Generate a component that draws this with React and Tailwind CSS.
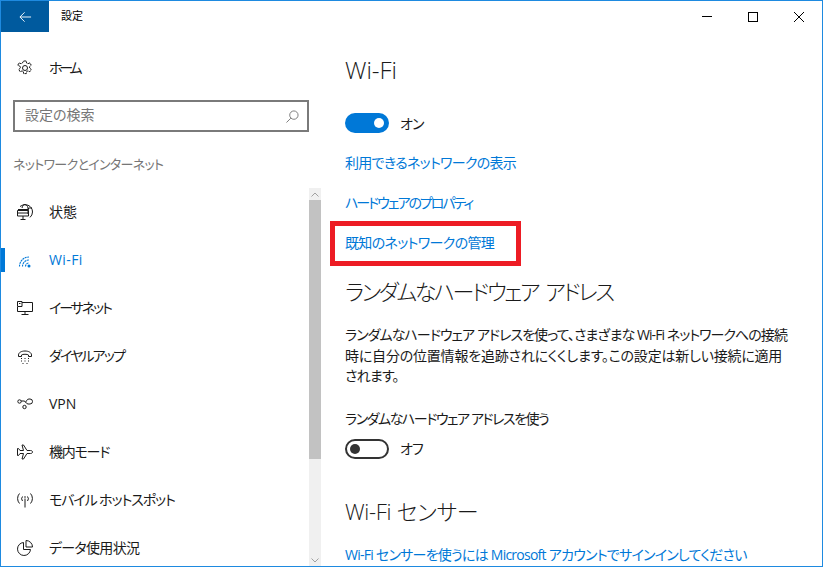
import { useState } from "react";

const font = "font-['Open_Sans','Noto_Sans_CJK_JP',sans-serif] [font-feature-settings:'palt']";

const Stroke = ({ children, className = "" }) => (
  <svg
    viewBox="0 0 16 16"
    fill="none"
    stroke="currentColor"
    strokeWidth="1"
    className={`w-4 h-4 shrink-0 ${className}`}
  >
    {children}
  </svg>
);

const GearIcon = () => (
  <Stroke>
    <path d="M6.700.5h2.600l.4 2.100 1.200.6 2-.8 1.300 2.300-1.600 1.400v1.400l1.600 1.400-1.300 2.300-2-.8-1.200.6-.4 2.100H6.700l-.4-2.100-1.200-.6-2 .8-1.300-2.300 1.600-1.400V6.100L.8 4.700l1.300-2.300 2 .8 1.200-.6z" transform="translate(0 .5)" strokeDasharray="2.500 .5" />
    <circle cx="8" cy="8" r="2.500" />
  </Stroke>
);

const StatusIcon = () => (
  <Stroke>
    <path d="M3 2.500A7.500 7.500 0 0 1 15.500 8a7.500 7.500 0 0 1-2.500 5.400M5 4c.5-2 1.600-3.500 3-3.500s2.700 1.500 3 3.500v6M1 5.500h10.500V4h3.500M.5 6.500v5.500h11V6.500zM.5 9h11M6 12v3M3.500 15.500h5" />
  </Stroke>
);

const WifiIcon = () => (
  <Stroke>
    <path d="M2.500 14.500A9.500 9.500 0 0 1 12 5M5.500 14.500A6.500 6.500 0 0 1 12 8M8.500 14.500A3.500 3.500 0 0 1 12 11" strokeWidth="1.100" strokeDasharray="2 .6" />
    <circle cx="12" cy="14" r="1.500" fill="currentColor" stroke="none" />
  </Stroke>
);

const EthernetIcon = () => (
  <Stroke>
    <path d="M5 2.500h10.500v9H.5V7M8 11.500v3M4.500 14.500h7" />
    <path d="M.5 1.500h4.500v5H.5zM2 3.500h1.500" />
  </Stroke>
);

const DialIcon = () => (
  <Stroke>
    <path d="M1.500 8.500V7C1.500 4.500 4.500 3 8 3s6.500 1.500 6.500 4v1.500h-3V7C10.500 6 5.500 6 4.500 7v1.500z" />
    <path d="M4 10.500h1M7.500 10.500h1M11 10.500h1M4 13h1M7.500 13h1M11 13h1M5.500 15.500h1M9.500 15.500h1" />
  </Stroke>
);

const VpnIcon = () => (
  <Stroke>
    <circle cx="2.500" cy="5.500" r="1.700" />
    <circle cx="7.500" cy="11" r="1.700" />
    <path d="M4 5h3c2 0 2 3 4 3h2a2.500 2.500 0 0 0 0-5h-1c-2 0-2.500 2-3.500 3.500" />
  </Stroke>
);

const PlaneIcon = () => (
  <Stroke>
    <path d="M15.500 8c0-1-1-1.500-2-1.500H10L6.500 1H5l1.500 5.500H3L1.500 4.500H.5v7h1L3 9.500h3.500L5 15h1.500L10 9.500h3.500c1 0 2-.5 2-1.500z" />
  </Stroke>
);

const HotspotIcon = () => (
  <Stroke>
    <path d="M8 6.500V15.500M5.500 4.500a3.500 3.500 0 0 0 0 4.500M10.500 4.500a3.500 3.500 0 0 1 0 4.500M2.500 1.500a7.500 7.500 0 0 0 0 10M13.500 1.500a7.500 7.500 0 0 1 0 10" />
    <circle cx="8" cy="5" r=".8" fill="currentColor" stroke="none" />
  </Stroke>
);

const PieIcon = () => (
  <Stroke>
    <path d="M6.500 2.500a6.500 6.500 0 1 0 7 7h-7z" />
    <path d="M9 .5a6.500 6.500 0 0 1 6.500 6.500H9z" />
  </Stroke>
);

const navItems = [
  { label: "状態", icon: <StatusIcon />, fit: "tracking-[0px]" },
  { label: "Wi-Fi", icon: <WifiIcon />, active: true, fit: "tracking-[0.4px]" },
  { label: "イーサネット", icon: <EthernetIcon />, fit: "tracking-[-2.1px]" },
  { label: "ダイヤルアップ", icon: <DialIcon />, fit: "tracking-[-1.85px]" },
  { label: "VPN", icon: <VpnIcon />, fit: "tracking-[0px]" },
  { label: "機内モード", icon: <PlaneIcon />, fit: "tracking-[-1.2px]" },
  { label: "モバイル ホットスポット", icon: <HotspotIcon />, fit: "tracking-[-1.1px]" },
  { label: "データ使用状況", icon: <PieIcon />, fit: "tracking-[-0.7px]" },
];

function NavRow({ item }) {
  return (
    <div
      className={`relative h-12 shrink-0 flex items-center pl-4 gap-4 text-[14px] ${
        item.active ? "text-[#0078d7]" : "text-[#1a1a1a]"
      }`}
    >
      {item.active && <div className="absolute left-0 top-3 w-1 h-6 bg-[#0078d7]" />}
      {item.icon}
      <span className={`whitespace-nowrap pb-[2px] ${item.fit}`}>{item.label}</span>
    </div>
  );
}

function Toggle({ on, label }) {
  return (
    <div className="flex items-center h-5 gap-[11px] text-[14px] text-[#1a1a1a] tracking-[-0.8px]">
      {on ? (
        <div className="w-11 h-5 rounded-full bg-[#0078d7] flex items-center justify-end px-[5px]">
          <div className="w-[10px] h-[10px] rounded-full bg-white" />
        </div>
      ) : (
        <div className="w-11 h-5 rounded-full border-2 border-[#333333] flex items-center px-[3px]">
          <div className="w-[10px] h-[10px] rounded-full bg-[#333333]" />
        </div>
      )}
      <span>{label}</span>
    </div>
  );
}

function WinLink({ children, className = "" }) {
  return (
    <a href="#" className={`block h-5 leading-5 text-[14px] text-[#0078d7] whitespace-nowrap ${className}`}>
      {children}
    </a>
  );
}

export default function App() {
  const [query, setQuery] = useState("");

  return (
    <div className={`w-[823px] h-[567px] bg-white border border-[#1e8ae0] overflow-hidden flex flex-col ${font}`}>
      <header className="h-[31px] shrink-0 flex items-center">
        <button className="w-12 h-[31px] bg-[#005a9e] text-white flex items-center justify-center">
          <svg viewBox="0 0 14 12" fill="none" stroke="currentColor" strokeWidth="1" className="w-[13px] h-3">
            <path d="M13 6H1M6 1 1 6l5 5" />
          </svg>
        </button>
        <span className="ml-3 text-[11px] text-black">設定</span>
        <div className="ml-auto flex text-black">
          <div className="w-[46px] h-[31px] flex items-center justify-center">
            <div className="w-[10px] h-px bg-black" />
          </div>
          <div className="w-[46px] h-[31px] flex items-center justify-center">
            <div className="w-[10px] h-[10px] border border-black" />
          </div>
          <div className="w-[46px] h-[31px] flex items-center justify-center">
            <svg viewBox="0 0 10 10" stroke="currentColor" strokeWidth="1" className="w-[10px] h-[10px]">
              <path d="M0 0l10 10M10 0 0 10" />
            </svg>
          </div>
        </div>
      </header>

      <div className="flex flex-1 min-h-0">
        <aside className="w-[321px] shrink-0 flex flex-col">
          <div className="h-[156px] shrink-0 flex flex-col">
            <div className="h-[48px] mt-3 shrink-0 flex items-center pl-4 gap-4 text-[14px] text-[#1a1a1a]">
              <GearIcon />
              <span className="pb-[2px] tracking-[-3.2px]">ホーム</span>
            </div>
            <div className="mt-2 ml-3 w-[296px] h-8 border-2 border-[#7a7a7a] flex items-center pl-[10px] pr-2">
              <input
                value={query}
                onChange={(e) => setQuery(e.target.value)}
                placeholder="設定の検索"
                className="flex-1 min-w-0 pb-[3px] outline-none text-[14px] text-[#1a1a1a] placeholder:text-[#767676]"
              />
              <svg viewBox="0 0 14 14" fill="none" stroke="#767676" strokeWidth="1" className="w-[13px] h-[13px]">
                <circle cx="8.500" cy="5.500" r="4.500" />
                <path d="M5.200 8.800.5 13.500" />
              </svg>
            </div>
            <div className="mt-[22px] ml-3 text-[13px] leading-5 text-[#767676] whitespace-nowrap tracking-[-0.7px]">
              ネットワークとインターネット
            </div>
          </div>

          <div className="flex-1 min-h-0 flex">
            <nav className="w-[308px] shrink-0 overflow-hidden flex flex-col">
              {navItems.map((item) => (
                <NavRow key={item.label} item={item} />
              ))}
            </nav>
            <div className="w-3 shrink-0 bg-[#f0f0f0] flex flex-col">
              <div className="h-3 shrink-0 flex items-center justify-center text-[#a0a0a0]">
                <svg viewBox="0 0 8 5" fill="none" stroke="currentColor" className="w-2 h-[5px]">
                  <path d="M.5 4.500 4 1l3.500 3.500" />
                </svg>
              </div>
              <div className="h-[259px] shrink-0 bg-[#c2c2c2]" />
              <div className="mt-auto h-3 shrink-0 flex items-center justify-center text-[#a0a0a0]">
                <svg viewBox="0 0 8 5" fill="none" stroke="currentColor" className="w-2 h-[5px]">
                  <path d="M.5.500 4 4 7.500.5" />
                </svg>
              </div>
            </div>
          </div>
        </aside>

        <main className="relative flex-1 min-w-0 pl-[23px] pt-[20px]">
          <h1 className="h-9 leading-9 text-[24px] font-light text-[#1a1a1a]">Wi-Fi</h1>
          <div className="mt-[25px]">
            <Toggle on label="オン" />
          </div>
          <WinLink className="mt-5 tracking-[-0.7px]">利用できるネットワークの表示</WinLink>
          <WinLink className="mt-5 tracking-[-2px]">ハードウェアのプロパティ</WinLink>
          <WinLink className="mt-5 tracking-[-0.65px]">既知のネットワークの管理</WinLink>
          <h2 className="mt-5 h-9 leading-9 text-[22px] font-light text-[#1a1a1a] whitespace-nowrap tracking-[-2.4px] [word-spacing:4px]">
            ランダムなハードウェア アドレス
          </h2>
          <p className="mt-[16px] text-[14px] leading-[20.5px] text-[#1a1a1a] whitespace-nowrap">
            <span className="tracking-[-0.95px]">ランダムなハードウェア アドレスを使って、さまざまな Wi-Fi ネットワークへの接続</span>
            <br />
            <span className="tracking-[-0.2px]">時に自分の位置情報を追跡されにくくします。この設定は新しい接続に適用</span>
            <br />
            <span className="tracking-[-0.8px]">されます。</span>
          </p>
          <div className="mt-[22px] h-5 leading-5 text-[14px] text-[#1a1a1a] whitespace-nowrap tracking-[-1.45px]">
            ランダムなハードウェア アドレスを使う
          </div>
          <div className="mt-[10px]">
            <Toggle label="オフ" />
          </div>
          <h2 className="mt-[34px] h-9 leading-9 text-[22px] font-light text-[#1a1a1a] whitespace-nowrap tracking-[-0.3px]">
            Wi-Fi センサー
          </h2>
          <WinLink className="mt-[16px] tracking-[-0.75px]">Wi-Fi センサーを使うには Microsoft アカウントでサインインしてください</WinLink>
          {/* red annotation over the screenshot */}
          <div className="absolute left-[8px] top-[189px] w-[191px] h-[45px] border-[5px] border-[#ed1c24] pointer-events-none" />
        </main>
      </div>
    </div>
  );
}
